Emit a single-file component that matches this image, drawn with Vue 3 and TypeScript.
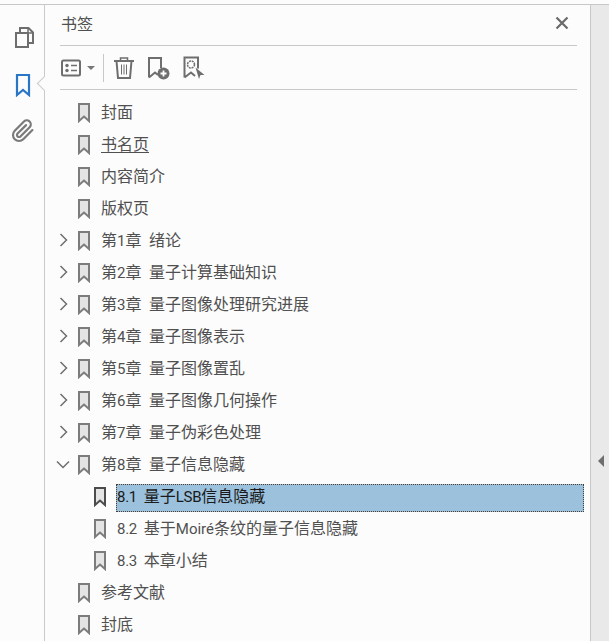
<script setup lang="ts">
interface Row {
  text: string;
  level?: number;
  arrow?: 'right' | 'down';
  selected?: boolean;
  underline?: boolean;
}

const rows: Row[] = [
  { text: '封面' },
  { text: '书名页', underline: true },
  { text: '内容简介' },
  { text: '版权页' },
  { text: '第1章  绪论', arrow: 'right' },
  { text: '第2章  量子计算基础知识', arrow: 'right' },
  { text: '第3章  量子图像处理研究进展', arrow: 'right' },
  { text: '第4章  量子图像表示', arrow: 'right' },
  { text: '第5章  量子图像置乱', arrow: 'right' },
  { text: '第6章  量子图像几何操作', arrow: 'right' },
  { text: '第7章  量子伪彩色处理', arrow: 'right' },
  { text: '第8章  量子信息隐藏', arrow: 'down' },
  { text: '8.1  量子LSB信息隐藏', level: 1, selected: true },
  { text: '8.2  基于Moiré条纹的量子信息隐藏', level: 1 },
  { text: '8.3  本章小结', level: 1 },
  { text: '参考文献' },
  { text: '封底' },
];

// latin runs are set smaller than the CJK ones, like the original font does
function parts(text: string) {
  return text.split(/([\x20-\x7e\u00e9]+)/).filter(Boolean).map((value) => ({
    value,
    latin: /^[\x20-\x7e\u00e9]/.test(value),
    tight: value === 'LSB' || value.includes('.'),
  }));
}
</script>

<template>
  <div class="viewer">
    <aside class="rail">
      <svg class="rail-icon" width="24" height="24" viewBox="0 0 24 24" fill="none" stroke="#6e6e6e" stroke-width="2">
        <path d="M9 7V3h8.500L22 7.500V18h-4" />
        <path d="M17 3v5h5" stroke-width="1.500" />
        <path d="M5 8h12v14H5z" />
      </svg>
      <svg class="rail-icon" width="24" height="24" viewBox="0 0 24 24" fill="none" stroke="#2a76c6" stroke-width="2.200">
        <path d="M6 2h12v20l-6-5-6 5z" />
      </svg>
      <svg class="rail-icon clip" width="24" height="24" viewBox="0 0 24 24" fill="none" stroke="#7a7a7a" stroke-width="2.200" stroke-linecap="round">
        <path d="M21.440 11.050l-9.190 9.190a6 6 0 0 1-8.490-8.490l9.190-9.190a4 4 0 0 1 5.660 5.660l-9.200 9.190a2 2 0 0 1-2.830-2.830l8.490-8.480" />
      </svg>
      <span class="notch"></span>
    </aside>

    <main class="panel">
      <header class="panel-head">
        <span class="panel-title">书签</span>
        <svg width="14" height="14" viewBox="0 0 14 14" stroke="#6a6a6a" stroke-width="2.200" fill="none">
          <path d="M1.500 1.500l11 11M12.500 1.500l-11 11" />
        </svg>
      </header>

      <div class="toolbar">
        <svg width="20" height="18" viewBox="0 0 20 18" fill="none">
          <rect x="1" y="1.500" width="18" height="15" rx="1.500" stroke="#6e6e6e" stroke-width="2" />
          <circle cx="6" cy="6.500" r="1.700" fill="#6e6e6e" />
          <circle cx="6" cy="11.500" r="1.700" fill="#6e6e6e" />
          <path d="M10 6.500h6M10 11.500h6" stroke="#6e6e6e" stroke-width="1.600" />
        </svg>
        <span class="caret"></span>
        <span class="tool-sep"></span>
        <svg class="tool-trash" width="22" height="24" viewBox="0 0 22 24" fill="none" stroke="#6e6e6e">
          <path d="M1 5h20" stroke-width="2" />
          <path d="M7.500 5V2h7v3" stroke-width="1.500" />
          <path d="M3.500 5l1.500 17h12l1.500-17" stroke-width="2" />
          <path d="M8.500 8.500v10M11 8.500v10M13.500 8.500v10" stroke-width="1" />
        </svg>
        <svg class="tool-add" width="24" height="24" viewBox="0 0 24 24" fill="none">
          <path d="M2 21.500V2h12v10M2 21.500l6-5 3 2.500" stroke="#6e6e6e" stroke-width="2" />
          <circle cx="16.500" cy="17.500" r="6" fill="#6e6e6e" />
          <path d="M13.500 17.500h6M16.500 14.500v6" stroke="#fff" stroke-width="1.800" />
        </svg>
        <svg class="tool-props" width="22" height="24" viewBox="0 0 22 24" fill="none">
          <path d="M1.500 21.500V1.500h13.500v11M1.500 21.500l6.500-5 4 3.500" stroke="#6e6e6e" stroke-width="2" />
          <circle cx="8" cy="8.500" r="3.500" stroke="#6e6e6e" stroke-width="1.500" stroke-dasharray="2 0.800" />
          <path d="M12.500 11.500L21.500 19h-4l-1.500 4z" fill="#6e6e6e" />
        </svg>
      </div>

      <ul class="tree">
        <li v-for="row in rows" :key="row.text" class="row" :class="{ nested: row.level === 1 }">
          <span class="arrow-slot">
            <svg v-if="row.arrow === 'right'" class="arrow" width="9" height="14" viewBox="0 0 9 14" fill="none" stroke="#6e6e6e" stroke-width="1.500">
              <path d="M1.500 1l6 6-6 6" />
            </svg>
            <svg v-else-if="row.arrow === 'down'" class="arrow" width="14" height="9" viewBox="0 0 14 9" fill="none" stroke="#6e6e6e" stroke-width="1.500">
              <path d="M1 1.500l6 6 6-6" />
            </svg>
          </span>
          <svg class="mark" width="14" height="20" viewBox="0 0 14 20">
            <path d="M2 1h10v17l-5-4.500L2 18z" fill="#e4e4e4" :stroke="row.selected ? '#4c4c4c' : '#7c7c7c'" stroke-width="2" />
          </svg>
          <span class="label" :class="{ selected: row.selected, linked: row.underline }">
            <span v-for="(part, i) in parts(row.text)" :key="i" :class="{ latin: part.latin, tight: part.latin && part.tight }">{{ part.value }}</span>
          </span>
        </li>
      </ul>
    </main>

    <aside class="side">
      <span class="side-arrow"></span>
    </aside>
  </div>
</template>

<style scoped>
.viewer {
  display: flex;
  width: 609px;
  height: 641px;
  box-sizing: border-box;
  padding-top: 4px;
  overflow: hidden;
  background: #fcfcfc;
  font-family: "Noto Sans CJK SC", "Liberation Sans", sans-serif;
}

.viewer::before {
  content: '';
  position: absolute;
  top: 4px;
  left: 0;
  width: 609px;
  height: 1px;
  background: #c8c8c8;
}

.rail {
  position: relative;
  flex: none;
  width: 44px;
  border-right: 1px solid #cacaca;
  display: flex;
  flex-direction: column;
  align-items: center;
  gap: 24px;
  padding-top: 21px;
  box-sizing: content-box;
}

.rail-icon {
  display: block;
  margin-left: 1px;
}

.rail-icon.clip {
  margin-top: -2px;
}

.notch {
  position: absolute;
  top: 74px;
  right: -6px;
  width: 10px;
  height: 10px;
  transform: rotate(45deg);
  background: #fcfcfc;
  border-left: 1px solid #cacaca;
  border-bottom: 1px solid #cacaca;
}

.panel {
  flex: none;
  width: 546px;
  box-sizing: border-box;
  padding-left: 15px;
}

.panel-head {
  width: 517px;
  height: 42px;
  box-sizing: border-box;
  border-bottom: 1px solid #c8c8c8;
  display: flex;
  align-items: center;
  justify-content: space-between;
  padding: 0 8px 3px 1px;
}

.panel-title {
  font-size: 16px;
  color: #505050;
}

.toolbar {
  width: 517px;
  height: 44px;
  box-sizing: border-box;
  border-bottom: 1px solid #c8c8c8;
  display: flex;
  align-items: center;
  padding-left: 1px;
}

.caret {
  width: 0;
  height: 0;
  margin-left: 6px;
  border-left: 4px solid transparent;
  border-right: 4px solid transparent;
  border-top: 4px solid #777;
}

.tool-sep {
  width: 1px;
  height: 28px;
  margin-left: 8px;
  background: #c8c8c8;
}

.tool-trash {
  margin-left: 9px;
}

.tool-add {
  margin-left: 12px;
}

.tool-props {
  margin-left: 12px;
}

.tree {
  list-style: none;
  margin: 0;
  padding: 6px 0 0;
}

.row {
  height: 32px;
  display: flex;
  align-items: center;
}

.row.nested {
  padding-left: 16px;
}

.arrow-slot {
  flex: none;
  width: 6px;
  display: flex;
  justify-content: center;
  margin-right: 11px;
}

.arrow {
  flex: none;
}

.mark {
  flex: none;
  margin-top: 2px;
  margin-right: 10px;
}

.label {
  font-size: 16px;
  line-height: 26px;
  height: 28px;
  color: #505050;
  white-space: pre;
}

.latin {
  font-family: Roboto, "Liberation Sans", sans-serif;
  font-size: 15px;
}

.tight {
  letter-spacing: -0.3px;
}

.label.linked {
  text-decoration: underline;
  text-underline-offset: 2px;
}

.label.selected {
  width: 468px;
  height: 28px;
  line-height: 22px;
  margin-top: 4px;
  margin-left: -1px;
  padding-left: 1px;
  box-sizing: border-box;
  background: #9bc1dc;
  color: #1a1a1a;
  outline: 1px dotted #4a3a30;
  outline-offset: -1px;
}

.side {
  flex: none;
  width: 19px;
  margin-left: -1px;
  border-left: 1px solid #c8c8c8;
  background: #e9e9e9;
  display: flex;
  justify-content: center;
  padding-top: 451px;
  box-sizing: content-box;
}

.side-arrow {
  width: 0;
  height: 0;
  border-top: 6px solid transparent;
  border-bottom: 6px solid transparent;
  border-right: 6px solid #6e6e6e;
}
</style>
